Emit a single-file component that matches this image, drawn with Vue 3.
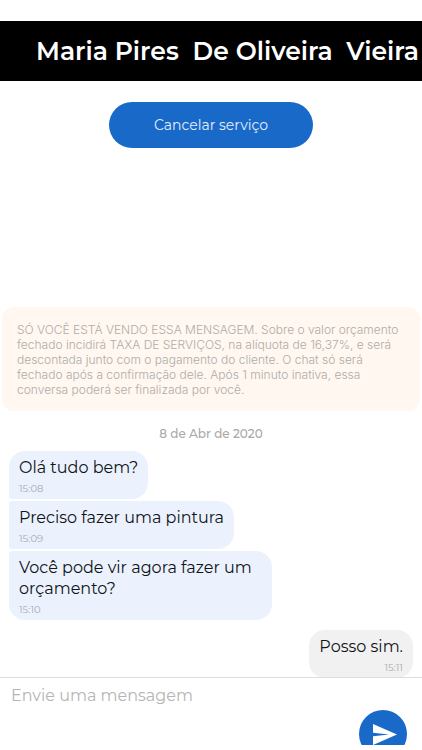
<script setup>
import { ref } from 'vue'

const draft = ref('')
const groups = [
  {
    side: 'received',
    messages: [
      { text: 'Olá tudo bem?', time: '15:08' },
      { text: 'Preciso fazer uma pintura', time: '15:09' },
      { text: 'Você pode vir agora fazer um orçamento?', time: '15:10' },
    ],
  },
  { side: 'sent', messages: [{ text: 'Posso sim.', time: '15:11' }] },
]
</script>

<template>
  <div class="screen">
    <header class="topbar">
      <h1 class="name">Maria Pires&nbsp; De Oliveira&nbsp; Vieira</h1>
    </header>
    <main class="chat">
      <button type="button" class="cancel">Cancelar serviço</button>
      <div class="history">
        <p class="notice">
          SÓ VOCÊ ESTÁ VENDO ESSA MENSAGEM. Sobre o valor orçamento<br />
          fechado incidirá TAXA DE SERVIÇOS, na alíquota de 16,37%, e será<br />
          descontada junto com o pagamento do cliente. O chat só será<br />
          fechado após a confirmação dele. Após 1 minuto inativa, essa<br />
          conversa poderá ser finalizada por você.
        </p>
        <p class="date">8 de Abr de 2020</p>
        <div v-for="group in groups" :key="group.side" class="group" :class="group.side">
          <div v-for="message in group.messages" :key="message.time" class="bubble">
            <p class="text">{{ message.text }}</p>
            <time class="time">{{ message.time }}</time>
          </div>
        </div>
      </div>
    </main>
    <form class="composer" @submit.prevent="draft = ''">
      <input v-model="draft" class="field" type="text" placeholder="Envie uma mensagem" aria-label="Envie uma mensagem" />
      <button type="submit" class="send" aria-label="Enviar">
        <svg width="24" height="22" viewBox="0 0 24 22" aria-hidden="true">
          <path d="M0 1 L24 11.5 L0 22 V13.3 L16 11.5 L0 9.7 Z" fill="#fff" />
        </svg>
      </button>
    </form>
  </div>
</template>

<style>
body {
  background: #fff;
}
</style>

<style scoped>
.screen {
  display: flex;
  flex-direction: column;
  box-sizing: border-box;
  height: 100vh;
  padding: 21px 0 5px;
  overflow: hidden;
  font-family: Montserrat, Inter, "Liberation Sans", sans-serif;
  color: #111418;
}
p,
h1 {
  margin: 0;
}
.topbar {
  flex: none;
  padding: 0 0 0 36px;
  background: #000;
}
.name {
  color: #fff;
  font-size: 25px;
  font-weight: 600;
  line-height: 60px;
  white-space: nowrap;
}
.chat {
  display: flex;
  flex: 1;
  flex-direction: column;
  min-height: 0;
  padding-top: 21px;
}
.cancel {
  flex: none;
  align-self: center;
  height: 46px;
  padding: 0 45px;
  border: 0;
  border-radius: 23px;
  background: #1969c9;
  color: #e6effb;
  font: inherit;
  font-size: 14px;
}
.history {
  display: flex;
  flex-direction: column;
  margin-top: auto;
}
.notice {
  margin: 0 2px;
  padding: 15px 15px 14px;
  border-radius: 12px;
  background: #fff7f0;
  color: #aeacaa;
  font-family: Inter, "Liberation Sans", sans-serif;
  font-size: 12px;
  font-weight: 300;
  line-height: 15px;
  white-space: nowrap;
}
.date {
  padding: 14px 0 8px;
  color: #a9a9a9;
  font-size: 12px;
  font-weight: 500;
  line-height: 18px;
  text-align: center;
}
.group {
  display: flex;
  flex-direction: column;
  gap: 2px;
  padding: 0 9px;
}
.received {
  align-items: flex-start;
}
.sent {
  align-items: flex-end;
  margin-top: 10px;
}
.bubble {
  box-sizing: border-box;
  max-width: 65%;
  padding: 6px 10px 3px;
  border-radius: 3px 16px 16px 3px;
  background: #ebf2fd;
}
.bubble:first-child {
  border-top-left-radius: 16px;
}
.bubble:last-child {
  border-bottom-left-radius: 16px;
}
.sent .bubble {
  border-radius: 16px;
  background: #f1f1f1;
}
.text {
  font-size: 16px;
  line-height: 21px;
}
.time {
  display: block;
  margin-top: 3px;
  color: #a7abb3;
  font-size: 10px;
  line-height: 15px;
}
.sent .time {
  text-align: right;
}
.composer {
  display: flex;
  flex: none;
  align-items: flex-start;
  box-sizing: border-box;
  height: 68px;
  margin-top: -1px;
  padding-right: 15px;
  overflow: hidden;
  border-top: 1px solid #dedede;
  background: #fff;
}
.field {
  flex: 1;
  min-width: 0;
  height: 34px;
  padding: 0 11px;
  border: 0;
  outline: 0;
  background: transparent;
  color: #111418;
  font: inherit;
  font-size: 16px;
}
.field::placeholder {
  color: #b5b5b5;
}
.send {
  display: flex;
  flex: none;
  align-items: center;
  justify-content: center;
  width: 48px;
  height: 48px;
  margin-top: 32px;
  padding: 0 0 0 4px;
  border: 0;
  border-radius: 50%;
  background: #1969c9;
}
</style>
